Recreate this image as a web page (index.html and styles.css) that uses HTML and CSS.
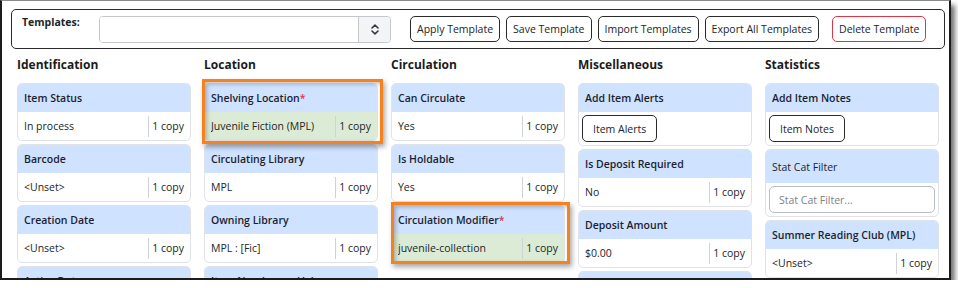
FILE: index.html
```html
<!DOCTYPE html>
<html>
<head>
<meta charset="utf-8">
<link rel="stylesheet" href="styles.css">
</head>
<body>
<div class="frame">
  <div class="templates">
    <div class="tpl-label">Templates:</div>
    <div class="select">
      <div class="select-field"></div>
      <div class="select-arrow">
        <svg width="8" height="11" viewBox="0 0 8 11"><path d="M1 4 L4 1.2 L7 4 M1 7 L4 9.8 L7 7" fill="none" stroke="#343a40" stroke-width="1.6" stroke-linecap="round" stroke-linejoin="round"/></svg>
      </div>
    </div>
    <div class="btns">
      <button class="btn">Apply Template</button>
      <button class="btn">Save Template</button>
      <button class="btn">Import Templates</button>
      <button class="btn">Export All Templates</button>
      <button class="btn btn-danger">Delete Template</button>
    </div>
  </div>

  <div class="columns">
    <div class="col">
      <h2 class="col-title">Identification</h2>
      <div class="card"><div class="card-h">Item Status</div><div class="card-b"><span class="val">In process</span><span class="cnt">1 copy</span></div></div>
      <div class="card"><div class="card-h">Barcode</div><div class="card-b"><span class="val">&lt;Unset&gt;</span><span class="cnt">1 copy</span></div></div>
      <div class="card"><div class="card-h">Creation Date</div><div class="card-b"><span class="val">&lt;Unset&gt;</span><span class="cnt">1 copy</span></div></div>
      <div class="card"><div class="card-h">Active Date</div><div class="card-b"><span class="val">&lt;Unset&gt;</span><span class="cnt">1 copy</span></div></div>
    </div>

    <div class="col">
      <h2 class="col-title">Location</h2>
      <div class="card marked mark-a"><div class="card-h">Shelving Location<span class="req">*</span></div><div class="card-b changed"><span class="val">Juvenile Fiction (MPL)</span><span class="cnt">1 copy</span></div></div>
      <div class="card"><div class="card-h">Circulating Library</div><div class="card-b"><span class="val">MPL</span><span class="cnt">1 copy</span></div></div>
      <div class="card"><div class="card-h">Owning Library</div><div class="card-b"><span class="val">MPL : [Fic]</span><span class="cnt">1 copy</span></div></div>
      <div class="card"><div class="card-h">Item Number on Volume</div><div class="card-b"><span class="val">1</span><span class="cnt">1 copy</span></div></div>
    </div>

    <div class="col">
      <h2 class="col-title">Circulation</h2>
      <div class="card"><div class="card-h">Can Circulate</div><div class="card-b"><span class="val">Yes</span><span class="cnt">1 copy</span></div></div>
      <div class="card"><div class="card-h">Is Holdable</div><div class="card-b"><span class="val">Yes</span><span class="cnt">1 copy</span></div></div>
      <div class="card marked mark-b"><div class="card-h">Circulation Modifier<span class="req">*</span></div><div class="card-b changed"><span class="val">juvenile-collection</span><span class="cnt">1 copy</span></div></div>
    </div>

    <div class="col">
      <h2 class="col-title">Miscellaneous</h2>
      <div class="card"><div class="card-h">Add Item Alerts</div><div class="card-b tall"><button class="btn btn-sm">Item Alerts</button></div></div>
      <div class="card"><div class="card-h">Is Deposit Required</div><div class="card-b"><span class="val">No</span><span class="cnt">1 copy</span></div></div>
      <div class="card"><div class="card-h">Deposit Amount</div><div class="card-b"><span class="val">$0.00</span><span class="cnt">1 copy</span></div></div>
      <div class="card"><div class="card-h">Price</div><div class="card-b"><span class="val">$0.00</span><span class="cnt">1 copy</span></div></div>
    </div>

    <div class="col">
      <h2 class="col-title">Statistics</h2>
      <div class="card"><div class="card-h">Add Item Notes</div><div class="card-b tall"><button class="btn btn-sm">Item Notes</button></div></div>
      <div class="card"><div class="card-h plain">Stat Cat Filter</div><div class="card-b tall"><input class="filter" placeholder="Stat Cat Filter..."></div></div>
      <div class="card"><div class="card-h">Summer Reading Club (MPL)</div><div class="card-b"><span class="val">&lt;Unset&gt;</span><span class="cnt">1 copy</span></div></div>
    </div>
  </div>
</div>
</body>
</html>
```

FILE: styles.css
```css
* { box-sizing: border-box; }
html, body { margin: 0; padding: 0; background: #fff; }
body {
  font-family: "Open Sans", "Noto Sans", sans-serif;
  font-size: 10.5px;
  color: #212529;
}

.frame {
  width: 951px;
  height: 280px;
  border: 2px solid #1c1c1c;
  border-top: 1px solid #8a8a8a;
  box-shadow: 4px 5px 5px rgba(0,0,0,0.55);
  padding: 8px 4px 0 9px;
  overflow: hidden;
}

.templates {
  height: 40px;
  border: 1px solid #2b2b2b;
  border-radius: 5px;
  display: flex;
  align-items: center;
  padding-left: 10px;
}
.tpl-label {
  width: 77px;
  flex-shrink: 0;
  align-self: flex-start;
  margin-top: 5px;
  font-weight: 700;
  font-size: 10.5px;
}
.select {
  width: 292px;
  flex-shrink: 0;
  height: 27px;
  display: flex;
  border: 1px solid #c4c8cc;
  border-radius: 4px;
  overflow: hidden;
}
.select-field { flex: 1; background: #fff; border-right: 1px solid #c4c8cc; }
.select-arrow {
  width: 31px;
  background: #f3f4f6;
  display: flex;
  align-items: center;
  justify-content: center;
}
.btns { display: flex; gap: 6px; margin-left: 19px; flex-shrink: 0; }
.btn {
  font-family: inherit;
  font-size: 10.5px;
  color: #212529;
  background: #fff;
  border: 1px solid #2b2b2b;
  border-radius: 5px;
  height: 26px;
  padding: 0 6px;
  white-space: nowrap;
  flex-shrink: 0;
  cursor: pointer;
}
.btn-danger { border-color: #dc3545; margin-left: 7px; }

.columns {
  display: grid;
  grid-template-columns: repeat(5, 174px);
  column-gap: 13px;
  margin-left: 6px;
  align-items: start;
}
.col { display: flex; flex-direction: column; gap: 3px; }
.col-title {
  font-size: 12px;
  font-weight: 700;
  margin: 7px 0 6px;
  line-height: 18px;
  color: #1b1b1b;
}

.card {
  border: 1px solid #dfe2e6;
  border-radius: 5px;
  background: #fff;
}
.card-h {
  background: #cfe2ff;
  height: 28px;
  display: flex;
  align-items: center;
  padding: 0 6px;
  font-weight: 600;
  color: #1c1f2e;
  border-radius: 4px 4px 0 0;
  white-space: nowrap;
}
.card-h.plain { font-weight: 400; height: 33px; }
.req { color: #dc3545; }
.card-b {
  height: 28px;
  display: flex;
  align-items: center;
  padding: 0 6px;
  border-radius: 0 0 4px 4px;
}
.card-b.tall { height: 33px; padding: 0 3px; }
.card-b.changed { background: #dcebd5; }
.val { flex: 1; white-space: nowrap; overflow: hidden; }
.cnt {
  border-left: 1px solid #cfd3d7;
  padding-left: 3px;
  line-height: 21px;
  height: 21px;
  white-space: nowrap;
}
.btn-sm { height: 27px; padding: 0 10px; }
.filter {
  width: 100%;
  height: 27px;
  border: 1px solid #b9bec4;
  border-radius: 5px;
  font-family: inherit;
  font-size: 10.5px;
  padding: 0 9px;
  color: #212529;
}
.filter::placeholder { color: #7b8289; }

.marked { position: relative; }
.marked::after {
  content: "";
  position: absolute;
  border: 3px solid #f5821f;
  box-shadow: 2px 3px 5px rgba(0,0,0,0.35), inset 2px 2px 4px rgba(0,0,0,0.25);
  pointer-events: none;
}
.mark-a::after { left: -3px; right: -6px; top: -5px; bottom: -4px; }
.mark-b::after { left: -1px; right: -6px; top: -4px; bottom: -2px; }
```
